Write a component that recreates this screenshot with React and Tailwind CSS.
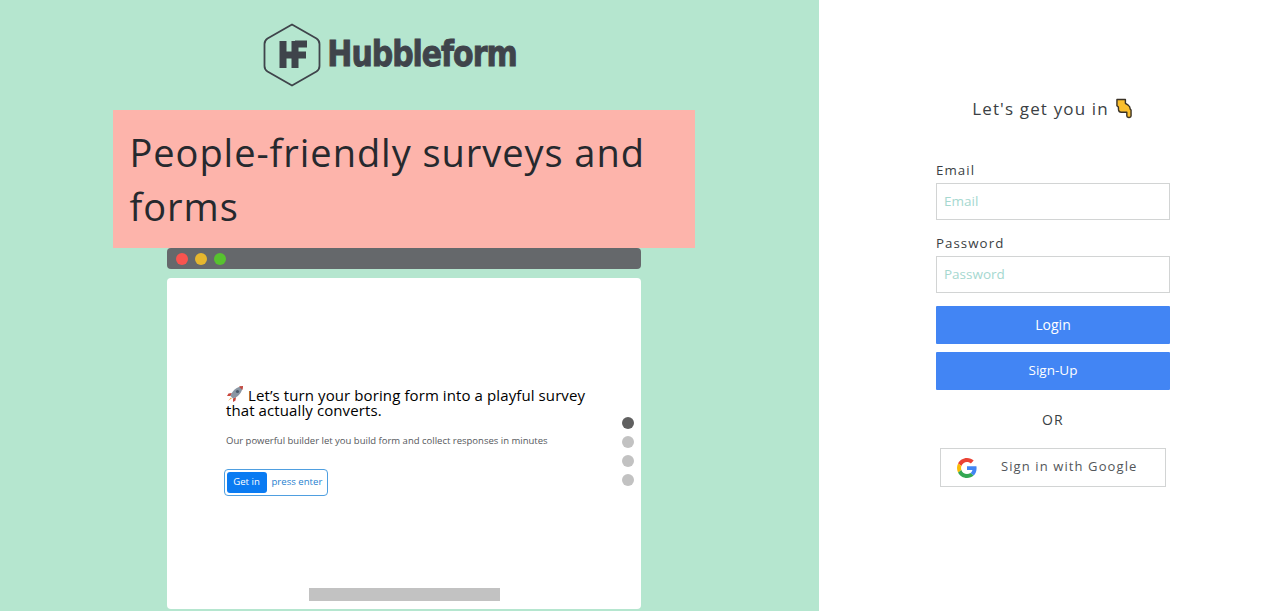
const openSans = { fontFamily: '"Open Sans", sans-serif' };

function Logo() {
  return (
    <div className="flex items-center h-[110px] pr-[28px]">
      <svg width="58" height="64" viewBox="0 0 58 64" fill="none" className="mr-[6px]">
        <path d="M29 1.5 L53.5 15.5 Q56.5 17.5 56.5 21 L56.5 43 Q56.5 46.5 53.5 48.5 L29 62.5 L4.5 48.5 Q1.5 46.5 1.5 43 L1.5 21 Q1.5 17.5 4.5 15.5 Z" stroke="#3f444b" strokeWidth="1.8" strokeLinejoin="round" />
        <path d="M20 18v27M32 18v27M20 32H43M32 21h12" stroke="#3f444b" strokeWidth="7" />
      </svg>
      <span className="text-[30px] font-bold text-[#3f444b] leading-none tracking-[-1.05px] pb-[2px] scale-y-[1.18]" style={{ fontFamily: '"DejaVu Sans", sans-serif', WebkitTextStroke: '0.8px #3f444b' }}>Hubbleform</span>
    </div>
  );
}

function Rocket() {
  return (
    <svg width="18" height="18" viewBox="0 0 18 18" className="inline-block mr-[4px] align-[-2px]">
      <path d="M6 8 L2.5 8.5 L1 11 L4.5 11Z" fill="#c8453b" />
      <path d="M10 12 L9.5 15.5 L7 17 L7 13.5Z" fill="#c8453b" />
      <path d="M4.5 11 C6 6 10 2 17 1 C16 8 12 12 7 13.5Z" fill="#8a96a3" />
      <path d="M13 1.6 C15 1.1 16 1.1 17 1 C16.9 2 16.8 3.2 16.4 5Z" fill="#c8453b" />
      <circle cx="11.5" cy="6.5" r="1.6" fill="#4a5a6a" />
      <path d="M2 16 L5 12.5 L5.8 13.2 Z" fill="#e8962e" />
    </svg>
  );
}

function Pointer() {
  return (
    <svg width="16" height="21" viewBox="0 0 17 21" className="ml-[7px]">
      <path d="M1 1 L10 1 L10 5 L13 7 Q15 8.5 15 10.5 L15 11 L16 12 L16 18.5 Q16 20 14 20 L13.5 20 Q11.5 20 11.5 18.5 L11.5 14.5 L5.5 14.5 Q3 14.5 2.7 12 L2.5 9 L1 7.5 Z" fill="#fbbf2d" stroke="#3a3226" strokeWidth="1.5" strokeLinejoin="round" />
    </svg>
  );
}

function GoogleG() {
  return (
    <svg width="20" height="20" viewBox="0 0 48 48">
      <path fill="#EA4335" d="M24 9.5c3.54 0 6.71 1.22 9.21 3.6l6.85-6.85C35.9 2.38 30.47 0 24 0 14.62 0 6.51 5.38 2.56 13.22l7.98 6.19C12.43 13.72 17.74 9.5 24 9.5z" />
      <path fill="#4285F4" d="M46.98 24.55c0-1.57-.15-3.09-.38-4.55H24v9.02h12.94c-.58 2.96-2.26 5.48-4.78 7.18l7.73 6c4.51-4.18 7.09-10.36 7.09-17.65z" />
      <path fill="#FBBC05" d="M10.53 28.59c-.48-1.45-.76-2.99-.76-4.59s.27-3.14.76-4.59l-7.98-6.19C.92 16.46 0 20.12 0 24c0 3.88.92 7.54 2.56 10.78l7.97-6.19z" />
      <path fill="#34A853" d="M24 48c6.48 0 11.93-2.13 15.89-5.81l-7.73-6c-2.15 1.45-4.92 2.3-8.16 2.3-6.26 0-11.57-4.22-13.47-9.91l-7.98 6.19C6.51 42.62 14.62 48 24 48z" />
    </svg>
  );
}

function Field({ label, type }) {
  return (
    <div className="flex flex-col">
      <label className="text-[13.3px] leading-[20px] tracking-[1.05px] text-[#3b3f44] h-[23px]">{label}</label>
      <input
        type={type}
        placeholder={label}
        className="w-full h-[37px] border border-[#d2d4d4] bg-white px-[7px] pb-[1px] text-[13.5px] outline-none placeholder:text-[#a5d8d0]"
      />
    </div>
  );
}

export default function App() {
  return (
    <div className="flex h-[611px] w-[1280px] overflow-hidden bg-white" style={openSans}>
      <div className="w-[819px] h-full bg-[#b5e6cf] flex flex-col items-center pr-[11px]">
        <Logo />
        <div className="w-[582px] h-[138px] bg-[#fdb4ab] px-[16.5px] py-[15px]">
          <h1 className="text-[38px] leading-[54px] tracking-[0.95px] text-[#26292e] font-normal">People-friendly surveys and forms</h1>
        </div>
        <div className="w-[474px] h-[21px] shrink-0 bg-[#65686b] rounded-[4px] flex items-center gap-[7px] pl-[9px]">
          <span className="w-[12px] h-[12px] rounded-full bg-[#f9544f]" />
          <span className="w-[12px] h-[12px] rounded-full bg-[#e6b72e]" />
          <span className="w-[12px] h-[12px] rounded-full bg-[#57c22f]" />
        </div>
        <div className="relative w-[474px] h-[331px] mt-[9px] bg-white rounded-[4px] shrink-0 pl-[59px] pt-[107px]">
          <h2 className="w-[375px] text-[15px] leading-[15px] text-black font-normal tracking-[0.1px]">
            <Rocket />Let’s turn your boring form into a playful survey that actually converts.
          </h2>
          <p className="mt-[16px] text-[9.5px] leading-[14px] text-[#55585c]">Our powerful builder let you build form and collect responses in minutes</p>
          <div className="mt-[21px] ml-[-2px] w-[104px] h-[27px] border-[1.5px] border-[#4f9fe0] rounded-[4px] flex items-center pl-[1.5px] gap-[5px]">
            <span className="w-[40px] h-[21px] bg-[#0a7bf2] rounded-[3px] text-white text-[9.6px] flex items-center justify-center">Get in</span>
            <span className="text-[9.6px] text-[#1f7fd0]">press enter</span>
          </div>
          <div className="absolute right-[7px] top-[139px] flex flex-col gap-[7px]">
            <span className="w-[12px] h-[12px] rounded-full bg-[#606060]" />
            <span className="w-[12px] h-[12px] rounded-full bg-[#c2c2c2]" />
            <span className="w-[12px] h-[12px] rounded-full bg-[#c2c2c2]" />
            <span className="w-[12px] h-[12px] rounded-full bg-[#c2c2c2]" />
          </div>
          <div className="absolute left-[142px] bottom-[8px] w-[191px] h-[13px] bg-[#c2c2c2]" />
        </div>
      </div>

      <div className="flex-1 h-full pl-[117px] pt-[97px]">
        <div className="w-[234px] flex flex-col">
          <div className="h-[23px] flex items-center justify-center text-[17px] tracking-[1.15px] text-[#3b3f44] pr-[2px]">
            Let's get you in<Pointer />
          </div>
          <div className="mt-[40px] flex flex-col gap-[13px]">
            <Field label="Email" type="email" />
            <Field label="Password" type="password" />
          </div>
          <button className="mt-[13px] h-[38px] pb-[2px] bg-[#4285f4] rounded-[1px] text-white text-[14px]">Login</button>
          <button className="mt-[8px] h-[38px] pb-[2px] bg-[#4285f4] rounded-[1px] text-white text-[13.5px]">Sign-Up</button>
          <div className="mt-[20px] h-[20px] text-center text-[14px] leading-[20px] tracking-[1.2px] text-[#3b3f44]">OR</div>
          <button className="mt-[18px] mx-[4px] h-[39px] border border-[#d2d4d4] bg-white flex items-center pl-[16px] gap-[24px] text-[13px] tracking-[1.1px] text-[#53565a]">
            <GoogleG />
            <span className="pb-[2px]">Sign in with Google</span>
          </button>
        </div>
      </div>
    </div>
  );
}
